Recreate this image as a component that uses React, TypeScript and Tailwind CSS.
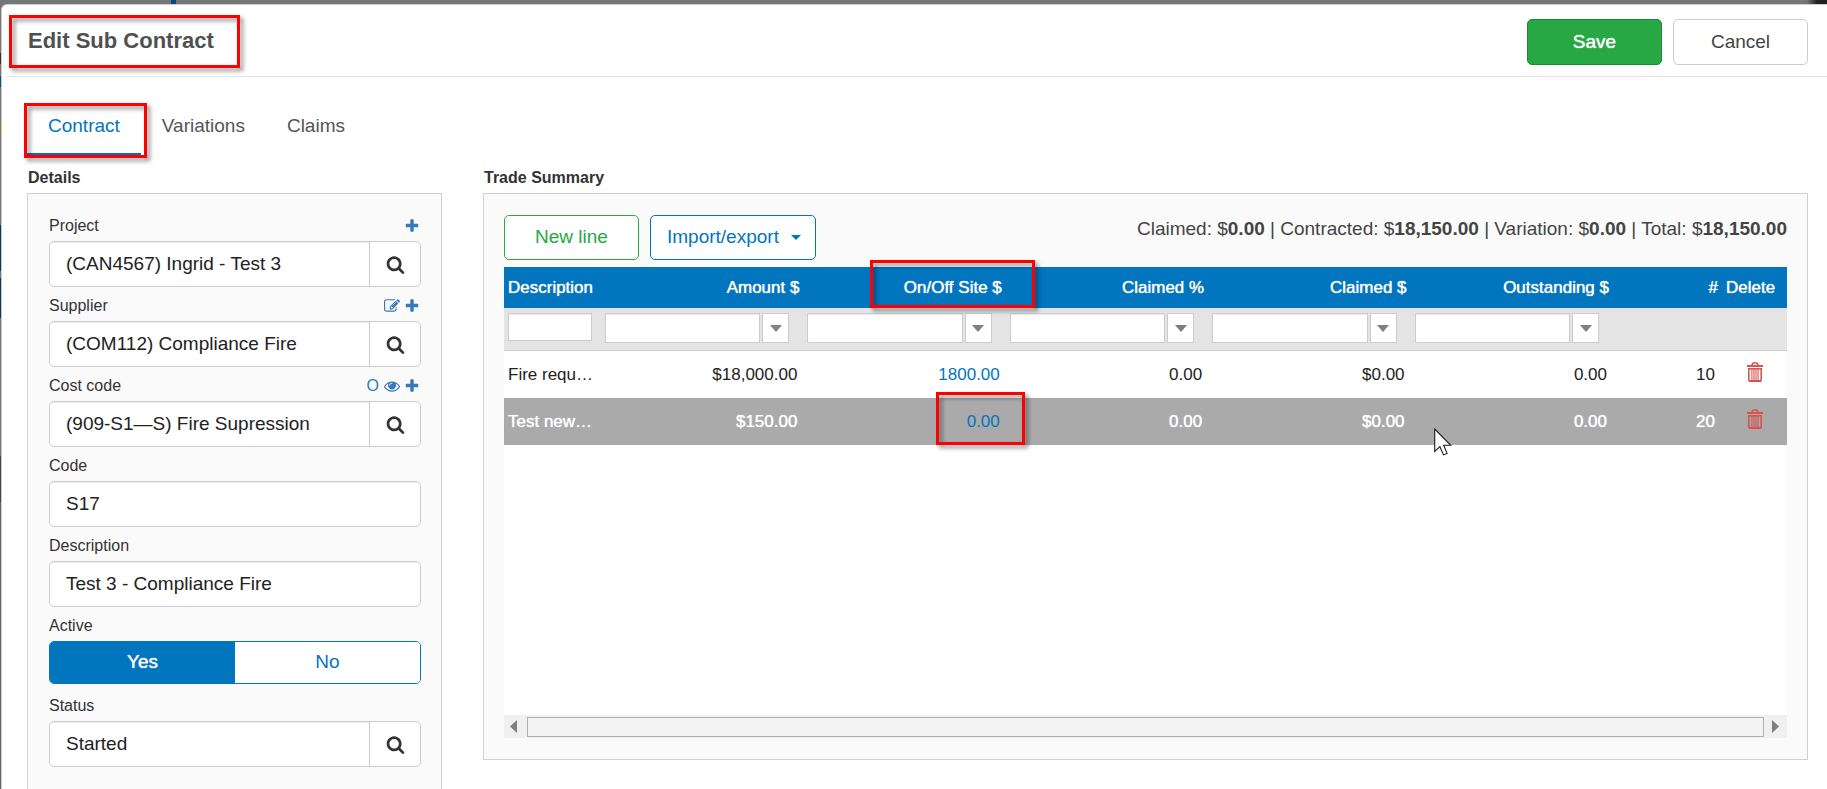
import React from "react";

const PLUS =
  "M1600 736v192q0 40-28 68t-68 28h-416v416q0 40-28 68t-68 28h-192q-40 0-68-28t-28-68v-416h-416q-40 0-68-28t-28-68v-192q0-40 28-68t68-28h416v-416q0-40 28-68t68-28h192q40 0 68 28t28 68v416h416q40 0 68 28t28 68z";
const SEARCH =
  "M1216 832q0-185-131.5-316.5t-316.5-131.5-316.5 131.5-131.5 316.5 131.5 316.5 316.5 131.5 316.5-131.5 131.5-316.5zm512 832q0 52-38 90t-90 38q-54 0-90-38l-343-342q-179 124-399 124-143 0-273.5-55.5t-225-150-150-225-55.5-273.5 55.5-273.5 150-225 225-150 273.5-55.5 273.5 55.5 225 150 150 225 55.5 273.5q0 220-124 399l343 343q37 37 37 90z";
const EDIT =
  "M888 1184l116-116-152-152-116 116v56h96v96h56zm440-720q-16-16-33 1l-350 350q-17 17-1 33t33-1l350-350q17-17 1-33zm80 594v190q0 119-84.5 203.5t-203.5 84.5h-832q-119 0-203.5-84.5t-84.5-203.5v-832q0-119 84.5-203.5t203.5-84.5h832q63 0 117 25 15 7 18 23 3 17-9 29l-49 49q-14 14-32 8-23-6-45-6h-832q-66 0-113 47t-47 113v832q0 66 47 113t113 47h832q66 0 113-47t47-113v-126q0-13 9-22l64-64q15-15 35-7t20 29zm-96-738l288 288-672 672h-288v-288zm444 132l-92 92-288-288 92-92q28-28 68-28t68 28l152 152q28 28 28 68t-28 68z";
const EYE =
  "M1664 960q-152-236-381-353 61 104 61 225 0 185-131.5 316.5t-316.5 131.5-316.5-131.5-131.5-316.5q0-121 61-225-229 117-381 353 133 205 333.5 326.5t434.5 121.5 434.5-121.5 333.5-326.5zm-720-384q0-20-14-34t-34-14q-125 0-214.5 89.5t-89.5 214.5q0 20 14 34t34 14 34-14 14-34q0-86 61-147t147-61q20 0 34-14t14-34zm848 384q0 34-20 69-140 230-376.5 368.5t-499.5 138.5-499.5-139-376.5-368q-20-35-20-69t20-69q140-229 376.5-368t499.5-139 499.5 139 376.5 368q20 35 20 69z";

function Icon({ path, className }: { path: string; className: string }) {
  return (
    <svg viewBox="0 0 1792 1792" fill="currentColor" aria-hidden="true" className={className}>
      <path d={path} />
    </svg>
  );
}

function TrashIcon() {
  return (
    <svg viewBox="0 0 16 20" fill="none" stroke="currentColor" aria-hidden="true" className="h-5 w-4">
      <path d="M0 4h16" strokeWidth="2" />
      <path d="M5 3.4Q5.2 1 6.8 1h2.4Q10.8 1 11 3.4" strokeWidth="1.6" />
      <path d="M1.8 6.8h12.4v11.2q0 1.2-1.2 1.2H3q-1.2 0-1.2-1.2z" strokeWidth="1.6" />
      <path d="M4.9 7v12M7 7v12M9 7v12M11.1 7v12" strokeWidth="1.1" />
      <path d="M2 18.8h12" strokeWidth="1.6" />
    </svg>
  );
}

function Highlight({ className }: { className: string }) {
  return (
    <span
      aria-hidden="true"
      className={`pointer-events-none absolute z-10 border-3 border-[#ff0000] drop-shadow-[3px_3px_2px_rgba(0,0,0,0.45)] ${className}`}
    />
  );
}

type FieldProps = { id: string; label: string; value: string; lookup?: boolean; actions?: React.ReactNode };

function Field({ id, label, value, lookup, actions }: FieldProps) {
  return (
    <div>
      <div className="flex h-[34px] items-center justify-between pt-1 text-base text-[#333]">
        <label htmlFor={id}>{label}</label>
        <div className="flex items-center gap-1 pr-px text-[#337ab7]">{actions}</div>
      </div>
      <div className="flex h-[46px] overflow-hidden rounded-[5px] border border-[#ccc] bg-white">
        <input
          id={id}
          type="text"
          defaultValue={value}
          className="min-w-0 flex-1 px-4 text-[19px] text-[#222] shadow-[inset_0_1px_1px_rgba(0,0,0,0.08)] outline-none"
        />
        {lookup && (
          <button type="button" aria-label={`Search ${label}`} className="flex w-[51px] items-center justify-center border-l border-[#ccc] text-[#333]">
            <Icon path={SEARCH} className="size-[19px]" />
          </button>
        )}
      </div>
    </div>
  );
}

function IconButton({ label, path, className }: { label: string; path: string; className: string }) {
  return (
    <button type="button" aria-label={label}>
      <Icon path={path} className={className} />
    </button>
  );
}

const COLUMNS = ["Amount $", "On/Off Site $", "Claimed %", "Claimed $", "Outstanding $"];
const ROWS = [
  { description: "Fire requ…", cells: ["$18,000.00", "1800.00", "0.00", "$0.00", "0.00"], number: "10", selected: false },
  { description: "Test new…", cells: ["$150.00", "0.00", "0.00", "$0.00", "0.00"], number: "20", selected: true },
];

function TradeTable() {
  return (
    <table className="w-full table-fixed border-collapse text-[17px]">
      <colgroup>
        <col className="w-[97px]" />
        {COLUMNS.map((c) => (
          <col key={c} />
        ))}
        <col className="w-[109px]" />
        <col className="w-[65px]" />
      </colgroup>
      <thead>
        <tr className="h-[41px] bg-[#0275bf] text-white [text-shadow:0_0_1px_#fff]">
          <th className="px-1 text-left font-normal">Description</th>
          {COLUMNS.map((c) => (
            <th key={c} className="relative px-1 text-right font-normal">
              {c}
              {c === "On/Off Site $" && <Highlight className="-top-[7px] left-[67px] h-12 w-[165px]" />}
            </th>
          ))}
          <th className="px-1 text-right font-normal">#</th>
          <th className="px-1 text-left font-normal">Delete</th>
        </tr>
        <tr className="h-[42px] border-b border-[#ccc] bg-[#e4e4e4]">
          <td className="px-1 pt-[5px] align-top">
            <input aria-label="Filter Description" className="block h-7 w-[84px] border border-[#ccc] bg-white px-1 shadow-[inset_0_1px_1px_rgba(0,0,0,0.08)]" />
          </td>
          {COLUMNS.map((c) => (
            <td key={c} className="pt-[5px] pr-[14px] pl-1 align-top">
              <div className="flex h-[30px] gap-[2px]">
                <input aria-label={`Filter ${c}`} className="min-w-0 flex-1 border border-[#ccc] bg-white px-1 shadow-[inset_0_1px_1px_rgba(0,0,0,0.08)]" />
                <button type="button" aria-label={`Filter options for ${c}`} className="flex w-[27px] items-center justify-center border border-[#ccc] bg-white text-[#7f7f7f]">
                  <svg viewBox="0 0 12 7" fill="currentColor" className="h-[7px] w-3" aria-hidden="true">
                    <path d="M0 0h12L6 7z" />
                  </svg>
                </button>
              </div>
            </td>
          ))}
          <td />
          <td />
        </tr>
      </thead>
      <tbody>
        {ROWS.map((row) => (
          <tr
            key={row.number}
            className={row.selected ? "h-[47px] bg-[#aaa] text-white [text-shadow:0_0_1px_#fff]" : "h-12 bg-white text-[#222]"}
          >
            <td className="px-1">{row.description}</td>
            {row.cells.map((value, i) => (
              <td key={COLUMNS[i]} className="relative pr-[6px] text-right">
                {i === 1 ? (
                  <a href="#site" className="text-[#0275bf] [text-shadow:none]">
                    {value}
                  </a>
                ) : (
                  value
                )}
                {i === 1 && row.selected && <Highlight className="-top-[6px] right-[-19px] h-[53px] w-[89px]" />}
              </td>
            ))}
            <td className="pr-[7px] text-right">{row.number}</td>
            <td className="pb-[5px] pl-[25px]">
              <button type="button" aria-label={`Delete line ${row.number}`} className="block text-[#d9534f]">
                <TrashIcon />
              </button>
            </td>
          </tr>
        ))}
      </tbody>
    </table>
  );
}

function ScrollBar() {
  return (
    <div className="flex h-[23px] items-center bg-[#f0f0f0] text-[#7f7f7f]">
      <button type="button" aria-label="Scroll left" className="flex w-[23px] justify-center pr-1">
        <svg viewBox="0 0 7 13" fill="currentColor" className="h-[13px] w-[7px]" aria-hidden="true">
          <path d="M7 0v13L0 6.5z" />
        </svg>
      </button>
      <div className="h-5 flex-1 border border-[#b0b0b0] bg-[#f4f4f4]" />
      <button type="button" aria-label="Scroll right" className="flex w-[23px] justify-center">
        <svg viewBox="0 0 7 13" fill="currentColor" className="h-[13px] w-[7px]" aria-hidden="true">
          <path d="M0 0v13l7-6.5z" />
        </svg>
      </button>
    </div>
  );
}

export default function App() {
  return (
    <div className="flex h-screen flex-col overflow-hidden bg-[linear-gradient(#767676_53px,#333_53px,#333_64px,#767676_64px,#767676_76px,#014f82_76px,#014f82_87px,#767676_87px,#767676_125px,#a87400_125px,#a87400_132px,#767676_132px,#767676_225px,#013a60_225px,#013a60_271px,#767676_271px,#767676_278px,#013a60_278px,#013a60_318px,#767676_318px,#767676_456px,#444_456px,#444_502px,#666_502px)] font-['Liberation_Sans',Arial,sans-serif] text-[#333]">
      <div className="flex h-1 shrink-0 items-start justify-between bg-[#767676]">
        <div className="ml-[171px] h-1 w-[5px] bg-[#014a7a]" />
        <div className="h-1 w-5 bg-linear-to-r from-[#767676] to-[#222] to-50%" />
      </div>
      <div className="relative ml-px flex min-h-0 flex-1 flex-col rounded-tl-md border-t border-l border-[#ccc] bg-white">
        <header className="ml-1 flex h-[72px] shrink-0 items-center justify-between border-b border-[#e5e5e5] pr-[19px]">
          <div className="relative pl-[22px]">
            <h1 className="text-[22px] leading-8 font-bold text-[#505050]">Edit Sub Contract</h1>
            <Highlight className="-top-[10px] left-[3px] h-[53px] w-[231px]" />
          </div>
          <div className="flex gap-[11px] pt-[3px] text-[19px]">
            <button type="button" className="h-[46px] w-[135px] rounded-[5px] border border-[#1e8a37] bg-[#28a745] text-white [text-shadow:0_0_1px_#fff]">
              Save
            </button>
            <button type="button" className="h-[46px] w-[135px] rounded-[5px] border border-[#ccc] bg-white text-[#444]">
              Cancel
            </button>
          </div>
        </header>

        <nav className="relative mt-[18px] flex shrink-0 pl-[25px] text-[19px] text-[#555]">
          <a href="#contract" className="h-[61px] border-b-[3px] border-[#0275bf] px-[21px] leading-[62px] text-[#0275bf]">
            Contract
          </a>
          <a href="#variations" className="px-[21px] leading-[62px]">
            Variations
          </a>
          <a href="#claims" className="px-[21px] leading-[62px]">
            Claims
          </a>
          <Highlight className="top-2 left-[22px] h-[55px] w-[123px]" />
        </nav>

        <main className="flex min-h-0 flex-1 items-start gap-[41px] pt-[7px] pr-[19px] pl-[25px]">
          <section className="flex h-full w-[415px] shrink-0 flex-col">
            <h2 className="pb-px pl-px text-base leading-7 font-bold">Details</h2>
            <form className="flex-1 border border-b-0 border-[#d0d0d0] bg-[#fafafa] pt-[13px] pr-5 pl-[21px]">
              <Field id="project" label="Project" value="(CAN4567) Ingrid - Test 3" lookup actions={<IconButton label="Add project" path={PLUS} className="size-4" />} />
              <Field
                id="supplier"
                label="Supplier"
                value="(COM112) Compliance Fire"
                lookup
                actions={
                  <>
                    <IconButton label="Edit supplier" path={EDIT} className="size-4" />
                    <IconButton label="Add supplier" path={PLUS} className="size-4" />
                  </>
                }
              />
              <Field
                id="cost-code"
                label="Cost code"
                value="(909-S1—S) Fire Supression"
                lookup
                actions={
                  <>
                    <button type="button" className="mr-px">O</button>
                    <IconButton label="View cost code" path={EYE} className="size-4" />
                    <IconButton label="Add cost code" path={PLUS} className="size-4" />
                  </>
                }
              />
              <Field id="code" label="Code" value="S17" />
              <Field id="description" label="Description" value="Test 3 - Compliance Fire" />
              <fieldset className="pb-[3px]">
                <legend className="h-[34px] pt-1 text-base leading-[30px]">Active</legend>
                <div className="flex h-[43px] overflow-hidden rounded-[5px] border border-[#0275bf] text-[19px]">
                  <button type="button" aria-pressed="true" className="flex-1 bg-[#0275bf] text-white [text-shadow:0_0_1px_#fff]">
                    Yes
                  </button>
                  <button type="button" aria-pressed="false" className="flex-1 bg-white text-[#0275bf]">
                    No
                  </button>
                </div>
              </fieldset>
              <Field id="status" label="Status" value="Started" lookup />
            </form>
          </section>

          <section className="min-w-0 flex-1">
            <h2 className="pb-px pl-px text-base leading-7 font-bold">Trade Summary</h2>
            <div className="border border-[#d0d0d0] bg-[#fafafa] px-5 pt-[21px] pb-[21px]">
              <div className="flex items-start justify-between pb-[7px] text-[19px]">
                <div className="flex gap-[11px]">
                  <button type="button" className="h-[45px] w-[135px] rounded-[5px] border border-[#28a745] bg-white text-[#28a745]">
                    New line
                  </button>
                  <button type="button" className="flex h-[45px] items-center gap-3 rounded-[5px] border border-[#0275bf] bg-white pr-[14px] pl-4 text-[#0275bf]">
                    Import/export
                    <svg viewBox="0 0 10 5" fill="currentColor" className="h-[5px] w-[10px]" aria-hidden="true">
                      <path d="M0 0h10L5 5z" />
                    </svg>
                  </button>
                </div>
                <p className="leading-[28px] text-[#444]">
                  Claimed: $<b>0.00</b> | Contracted: $<b>18,150.00</b> | Variation: $<b>0.00</b> | Total: $<b>18,150.00</b>
                </p>
              </div>
              <div className="min-h-[448px] bg-white">
                <TradeTable />
              </div>
              <ScrollBar />
            </div>
          </section>
        </main>

        <svg viewBox="0 0 18 28" className="pointer-events-none absolute top-[423px] left-[1432px] z-20 h-7 w-[18px]" aria-hidden="true">
          <path d="M.7 1v22.5l5.2-4.8 3.6 8.2 3.6-1.5-3.5-8.1h7.2z" fill="#fff" stroke="#1a1a2a" strokeWidth="1.1" />
        </svg>
      </div>
    </div>
  );
}
